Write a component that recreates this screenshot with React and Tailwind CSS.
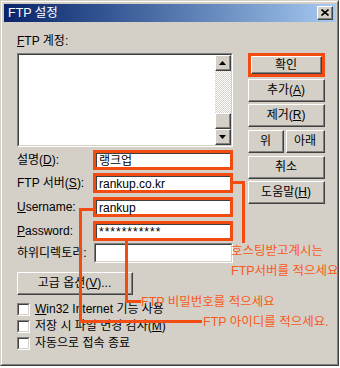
import React from "react";

const Raised = ({ className = "", children }) => (
  <div
    className={`border-t border-l border-r border-b border-t-white border-l-white border-r-[#404040] border-b-[#404040] bg-[#d4d0c8] ${className}`}
  >
    <div className="flex h-full w-full items-center justify-center border-r border-b border-r-[#808080] border-b-[#808080]">
      {children}
    </div>
  </div>
);

const Sunken = ({ className = "", children }) => (
  <div
    className={`border-t border-l border-r border-b border-t-[#808080] border-l-[#808080] border-r-white border-b-white ${className}`}
  >
    <div className="h-full w-full border-t border-l border-r border-b border-t-[#404040] border-l-[#404040] border-r-[#d4d0c8] border-b-[#d4d0c8] bg-white">
      {children}
    </div>
  </div>
);

const Marked = ({ children }) => (
  <div className="h-[20px] w-[140px] border-[3px] border-[#f24c12] bg-white">
    <div className="flex h-full items-center border-t border-l border-[#404040] pl-[2px] leading-[14px]">
      {children}
    </div>
  </div>
);

const Row = ({ label, className = "", children }) => (
  <div className={`flex h-[20px] items-center ${className}`}>
    <div className="w-[76px] leading-[16px]">{label}</div>
    {children}
  </div>
);

const Check = ({ className = "", children }) => (
  <div className={`flex h-[16px] items-center ${className}`}>
    <Sunken className="h-[13px] w-[13px]" />
    <span className="ml-[5px] leading-[16px]">{children}</span>
  </div>
);

const Arrow = ({ up }) => (
  <svg width="7" height="4" viewBox="0 0 7 4">
    <path d={up ? "M3.5 0 L7 4 L0 4 Z" : "M0 0 L7 0 L3.5 4 Z"} fill="#000" />
  </svg>
);

export default function App() {
  return (
    <div className="relative h-[368px] w-[340px] bg-white text-[12px] text-black font-['Liberation_Sans','Noto_Sans_CJK_KR',sans-serif]">
      {/* dialog window */}
      <div className="h-[366px] w-[339px] border-t border-l border-r border-b border-t-[#d4d0c8] border-l-[#d4d0c8] border-r-[#404040] border-b-[#404040] bg-[#d4d0c8]">
        <div className="h-full w-full border-t border-l border-r border-b border-t-white border-l-white border-r-[#808080] border-b-[#808080] pt-[2px] pl-[2px] pr-[1px]">
          {/* title bar */}
          <div className="flex h-[18px] items-center justify-between bg-linear-to-r from-[#0a246a] to-[#a6caf0] pl-[4px] pr-[3px]">
            <span className="text-[12.5px] leading-[16px] text-white">FTP 설정</span>
            <Raised className="h-[14px] w-[16px]">
              <svg width="8" height="7" viewBox="0 0 8 7">
                <path d="M0.5 0.5 L7.5 6.5 M7.5 0.5 L0.5 6.5" stroke="#000" strokeWidth="1.6" />
              </svg>
            </Raised>
          </div>

          {/* body */}
          <div className="flex items-start pl-[13px]">
            <div className="w-[216px]">
              <div className="mt-[11px] h-[16px] leading-[16px]">
                <u>F</u>TP 계정:
              </div>
              <Sunken className="mt-[4px] h-[94px] w-[216px]">
                <div className="flex h-full justify-end">
                  <div className="flex w-[16px] flex-col">
                    <Raised className="h-[16px] w-[16px]">
                      <Arrow up />
                    </Raised>
                    <div className="h-[42px] bg-[repeating-conic-gradient(#d4d0c8_0_25%,#ffffff_0_50%)] bg-[length:2px_2px]" />
                    <Raised className="h-[16px] w-[16px]" />
                    <Raised className="h-[16px] w-[16px]">
                      <Arrow />
                    </Raised>
                  </div>
                </div>
              </Sunken>

              <Row className="mt-[3px]" label={<>설명(<u>D</u>):</>}>
                <Marked>랭크업</Marked>
              </Row>
              <Row className="mt-[3px]" label={<>FTP 서버(<u>S</u>):</>}>
                <Marked>rankup.co.kr</Marked>
              </Row>
              <Row className="mt-[4px]" label={<><u>U</u>sername:</>}>
                <Marked>rankup</Marked>
              </Row>
              <Row className="mt-[4px]" label={<><u>P</u>assword:</>}>
                <Marked>
                  <span className="tracking-[1px]">***********</span>
                </Marked>
              </Row>
              <Row className="mt-[2px]" label="하위디렉토리:">
                <Sunken className="ml-[1px] h-[20px] w-[139px]" />
              </Row>

              <Raised className="mt-[9px] h-[23px] w-[116px]">
                <span className="leading-[16px]">
                  고급 옵션(<u>V</u>)...
                </span>
              </Raised>

              <Check className="mt-[6px]">
                <u>W</u>in32 Internet 기능 사용
              </Check>
              <Check className="mt-[1px]">
                저장 시 파일 변경 검사(<u>M</u>)
              </Check>
              <Check className="mt-[1px]">자동으로 접속 종료</Check>
            </div>

            {/* right buttons */}
            <div className="ml-[15px] mt-[31px] flex w-[77px] flex-col">
              <div className="h-[24px] border-[3px] border-[#f24c12]">
                <Raised className="h-full w-full">확인</Raised>
              </div>
              <Raised className="mt-[2px] h-[23px]">
                <span>
                  추가(<u>A</u>)
                </span>
              </Raised>
              <Raised className="mt-[2px] h-[23px]">
                <span>
                  제거(<u>R</u>)
                </span>
              </Raised>
              <div className="mt-[3px] flex gap-[2px]">
                <Raised className="h-[23px] w-[36px]">위</Raised>
                <Raised className="h-[23px] w-[39px]">아래</Raised>
              </div>
              <Raised className="mt-[3px] h-[23px]">취소</Raised>
              <Raised className="mt-[2px] h-[23px]">
                <span>
                  도움말(<u>H</u>)
                </span>
              </Raised>
            </div>
          </div>
        </div>
      </div>

      {/* annotations drawn over the dialog */}
      <div className="absolute left-[233px] top-[181px] h-[3px] w-[12px] bg-[#f24c12]" />
      <div className="absolute left-[242px] top-[181px] h-[62px] w-[3px] bg-[#f24c12]" />
      <div className="absolute left-[231px] top-[243px] text-[12.5px] leading-[16px] text-[#f85a1a]">
        호스팅받고계시는
      </div>
      <div className="absolute left-[231px] top-[263px] text-[12.5px] leading-[16px] text-[#f85a1a]">
        FTP서버를 적으세요
      </div>

      <div className="absolute left-[125px] top-[240px] h-[63px] w-[3px] bg-[#f24c12]" />
      <div className="absolute left-[125px] top-[300px] h-[3px] w-[16px] bg-[#f24c12]" />
      <div className="absolute left-[141px] top-[294px] text-[12.5px] leading-[16px] text-[#f85a1a]">
        FTP 비밀번호를 적으세요
      </div>

      <div className="absolute left-[79px] top-[208px] h-[3px] w-[15px] bg-[#f24c12]" />
      <div className="absolute left-[79px] top-[208px] h-[115px] w-[3px] bg-[#f24c12]" />
      <div className="absolute left-[79px] top-[320px] h-[3px] w-[123px] bg-[#f24c12]" />
      <div className="absolute left-[203px] top-[314px] text-[12.5px] leading-[16px] text-[#f85a1a]">
        FTP 아이디를 적으세요.
      </div>
    </div>
  );
}
